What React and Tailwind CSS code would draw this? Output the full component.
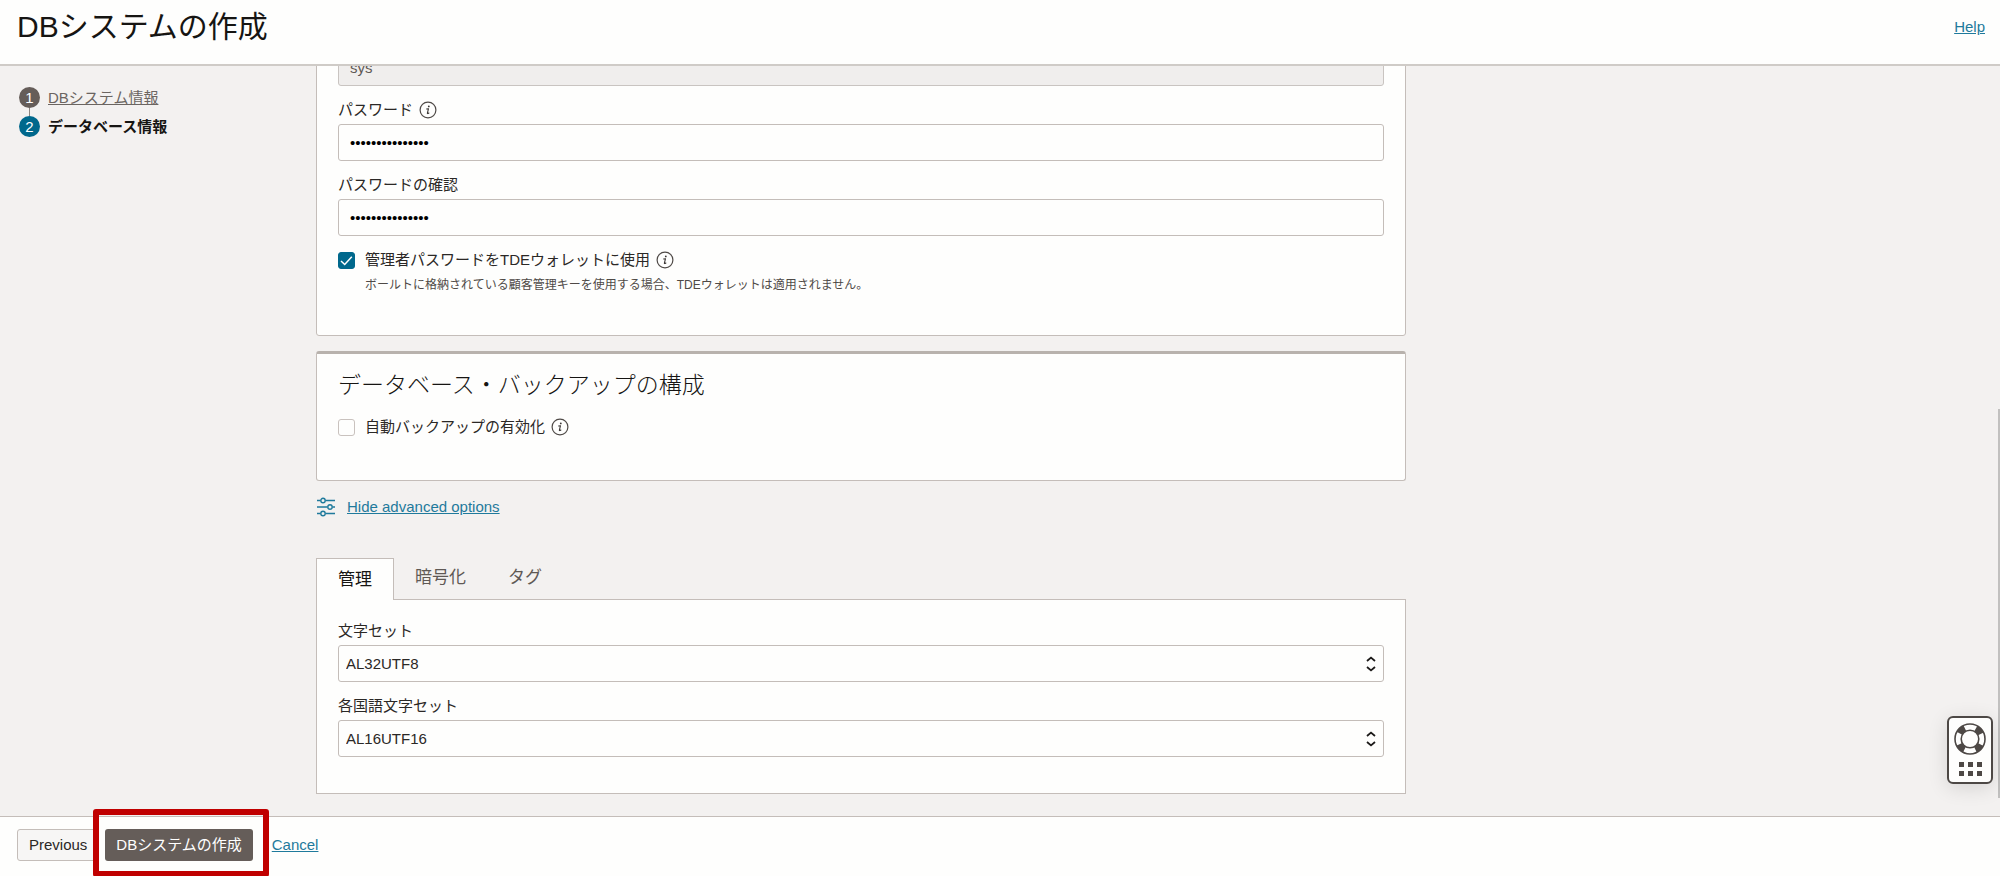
import React, { useState } from 'react';

const InfoIcon = () => (
  <svg viewBox="0 0 18 18" className="w-[18px] h-[18px] shrink-0" fill="none" aria-hidden="true">
    <circle cx="9" cy="9" r="7.9" stroke="#4f4a47" strokeWidth="1.2" />
    <circle cx="9.8" cy="5.4" r="0.9" fill="#3a3634" />
    <path d="M7.6 8 L9.5 7.7 L8.4 12.2 Q8.3 13 9.9 12.1" stroke="#3a3634" strokeWidth="1.1" strokeLinecap="round" strokeLinejoin="round" />
  </svg>
);

const SlidersIcon = () => (
  <svg viewBox="0 0 18 20" className="w-[18px] h-5 shrink-0" fill="none" stroke="#1f7a9c" strokeWidth="1.4" aria-hidden="true">
    <path d="M0 3.5H3.5M8.5 3.5H18M0 10H10.5M15.5 10H18M0 16.5H3.5M8.5 16.5H18" />
    <circle cx="6" cy="3.5" r="2.2" />
    <circle cx="13" cy="10" r="2.2" />
    <circle cx="6" cy="16.5" r="2.2" />
  </svg>
);

const UpDownIcon = () => (
  <svg viewBox="0 0 10 16" className="absolute right-2 top-1/2 w-[10px] h-4 -translate-y-1/2 pointer-events-none" fill="none" stroke="#1c1a19" strokeWidth="1.8" aria-hidden="true">
    <path d="M1 5L5 1.6L9 5M1 11L5 14.4L9 11" />
  </svg>
);

const LifeRingIcon = () => (
  <svg viewBox="0 0 32 32" className="w-8 h-8" fill="none" aria-hidden="true">
    <circle cx="16" cy="16" r="12" stroke="#4d4845" strokeWidth="6.4" strokeDasharray="7.4 11.45" strokeDashoffset="-5.72" />
    <circle cx="16" cy="16" r="15" stroke="#4d4845" strokeWidth="1.6" />
    <circle cx="16" cy="16" r="8.8" stroke="#4d4845" strokeWidth="1.6" />
  </svg>
);

const PasswordField = ({ id, label, info }) => (
  <div className="mt-[14px]">
    <div className="flex items-center gap-[6px] mb-1 h-5">
      <label htmlFor={id}>{label}</label>
      {info && <InfoIcon />}
    </div>
    <input
      id={id}
      type="password"
      defaultValue="Passw0rd##Passw"
      className="block w-full h-[37px] px-[11px] rounded-[3px] border border-[#c4bdb9] bg-[#fefefd] text-black"
    />
  </div>
);

const SelectField = ({ id, label, options }) => (
  <div>
    <label htmlFor={id} className="block mb-1 h-5">{label}</label>
    <div className="relative">
      <select id={id} className="block w-full h-[37px] px-[7px] appearance-none rounded-[3px] border border-[#c4bdb9] bg-[#fefefd]">
        {options.map((option) => (
          <option key={option}>{option}</option>
        ))}
      </select>
      <UpDownIcon />
    </div>
  </div>
);

const CheckField = ({ id, label, checked, onChange }) => (
  <div className="flex items-center h-5">
    <span className="relative flex w-[17px] h-[17px]">
      <input
        id={id}
        type="checkbox"
        checked={checked}
        onChange={onChange}
        className="w-[17px] h-[17px] appearance-none rounded-[3px] border border-[#c9c2be] bg-[#fefefd] checked:border-[#00688c] checked:bg-[#00688c]"
      />
      {checked && (
        <svg viewBox="0 0 17 17" className="absolute inset-0 pointer-events-none" fill="none" stroke="#fff" strokeWidth="1.5" aria-hidden="true">
          <path d="M3 9L6.7 12.5L13.8 4.8" />
        </svg>
      )}
    </span>
    <label htmlFor={id} className="ml-[10px] mr-[6px]">{label}</label>
    <InfoIcon />
  </div>
);

const tabs = ['管理', '暗号化', 'タグ'];

const App = () => {
  const [useTde, setUseTde] = useState(true);
  const [autoBackup, setAutoBackup] = useState(false);
  const [activeTab, setActiveTab] = useState('管理');

  return (
    <div className="flex flex-col h-screen bg-[#f3f1f0] font-['Liberation_Sans','Noto_Sans_CJK_JP',sans-serif] text-[15px] leading-5 text-[#2b2826]">
      <header className="flex items-center justify-between h-[66px] pl-[17px] pr-[15px] pb-[10px] shrink-0 border-b-2 border-[#cfcbc7] bg-[#fefefd]">
        <h1 className="text-[30px] leading-[40px] text-[#161513]">DBシステムの作成</h1>
        <a href="#help" className="text-[#1f7a9c] underline">Help</a>
      </header>

      <div className="relative flex flex-1 min-h-0 overflow-hidden">
        {/* Wizard steps */}
        <nav className="w-[316px] shrink-0 pl-[19px] pt-[21px]">
          <ol>
            <li className="flex gap-2">
              <span className="flex flex-col items-center w-[21px] h-[29px]">
                <span className="w-[21px] h-[21px] shrink-0 rounded-full bg-[#655d59] text-white text-center leading-[21px]">1</span>
                <span className="w-px flex-1 bg-[#8b8580]" />
              </span>
              <a href="#system" className="h-[21px] leading-[21px] underline text-[#6b6561]">DBシステム情報</a>
            </li>
            <li className="flex gap-2 font-bold text-[#161513]">
              <span className="w-[21px] h-[21px] rounded-full bg-[#00688c] text-white text-center font-normal leading-[21px]">2</span>
              <span className="leading-[21px]">データベース情報</span>
            </li>
          </ol>
        </nav>

        <main className="flex flex-col justify-end flex-1 min-w-0 max-w-[1090px] pb-[22px]">
          <section className="px-[21px] pt-5 pb-10 rounded-[3px] border border-[#c4bdb9] bg-[#fefefd]">
            <input
              aria-label="ユーザー名"
              defaultValue="sys"
              disabled
              className="block w-full h-[37px] px-[11px] rounded-[3px] border border-[#c9c4c1] bg-[#f0eeed] text-[#5f5955]"
            />
            <PasswordField id="password" label="パスワード" info />
            <PasswordField id="password-confirm" label="パスワードの確認" />
            <div className="mt-[14px]">
              <CheckField
                id="tde"
                label="管理者パスワードをTDEウォレットに使用"
                checked={useTde}
                onChange={(e) => setUseTde(e.target.checked)}
              />
              <p className="mt-[5px] ml-[27px] text-xs leading-5 text-[#4f4a47]">
                ボールトに格納されている顧客管理キーを使用する場合、TDEウォレットは適用されません。
              </p>
            </div>
          </section>

          <section className="mt-[15px] px-[21px] pt-4 pb-[43px] rounded-[3px] border border-t-3 border-[#c4bdb9] border-t-[#b8b2ad] bg-[#fefefd]">
            <h2 className="mb-[17px] text-[23px] leading-[30px] font-light text-[#161513]">データベース・バックアップの構成</h2>
            <CheckField
              id="auto-backup"
              label="自動バックアップの有効化"
              checked={autoBackup}
              onChange={(e) => setAutoBackup(e.target.checked)}
            />
          </section>

          <div className="flex items-center gap-3 mt-4 pl-px">
            <SlidersIcon />
            <a href="#advanced" className="text-[#1f7a9c] underline">Hide advanced options</a>
          </div>

          <div className="mt-[41px]">
            <div role="tablist" className="relative flex -mb-px text-[17px]">
              {tabs.map((tab) => (
                <button
                  key={tab}
                  type="button"
                  role="tab"
                  aria-selected={tab === activeTab}
                  onClick={() => setActiveTab(tab)}
                  className={`h-[42px] border border-b-0 ${tab === activeTab ? 'px-[21px] border-[#c4bdb9] bg-[#fefefd] text-[#161513]' : 'px-5 border-transparent pb-[3px] text-[#5f5955]'}`}
                >
                  {tab}
                </button>
              ))}
            </div>
            <section className="flex flex-col gap-[14px] px-[21px] pt-[21px] pb-9 border border-[#c4bdb9] bg-[#fefefd]">
              <SelectField id="charset" label="文字セット" options={['AL32UTF8', 'WE8ISO8859P1']} />
              <SelectField id="ncharset" label="各国語文字セット" options={['AL16UTF16', 'UTF8']} />
            </section>
          </div>
        </main>

        {/* Scroll thumb and floating support button */}
        <span className="absolute right-0 bottom-[18px] w-[2px] h-[389px] bg-[#c1c0bf]" />
        <button
          type="button"
          aria-label="Support"
          className="absolute right-[7px] bottom-8 flex flex-col items-center w-[46px] h-[68px] pt-[5px] gap-[7px] rounded-[6px] border-2 border-[#4d4845] bg-[#fefefd] shadow-[0_4px_20px_rgba(0,0,0,0.12)]"
        >
          <LifeRingIcon />
          <span className="grid grid-cols-3 gap-[4px]">
            {[0, 1, 2, 3, 4, 5].map((dot) => (
              <span key={dot} className="w-[5px] h-[5px] bg-[#4d4845]" />
            ))}
          </span>
        </button>
      </div>

      <footer className="flex items-center h-[60px] pl-[17px] pb-1 shrink-0 border-t border-[#c4bdb9] bg-[#fefefd]">
        <button type="button" className="h-8 px-[11px] mr-[6px] rounded-[3px] border border-[#c4bdb9] bg-[#f7f6f5]">Previous</button>
        <div className="relative">
          <button type="button" className="h-8 px-[11px] rounded-[3px] bg-[#655d59] text-white">DBシステムの作成</button>
          <span className="absolute -left-3 -right-4 -top-5 -bottom-4 rounded-[3px] border-6 border-[#c00000] pointer-events-none" />
        </div>
        <a href="#cancel" className="ml-[19px] text-[#1f7a9c] underline">Cancel</a>
      </footer>
    </div>
  );
};

export default App;
